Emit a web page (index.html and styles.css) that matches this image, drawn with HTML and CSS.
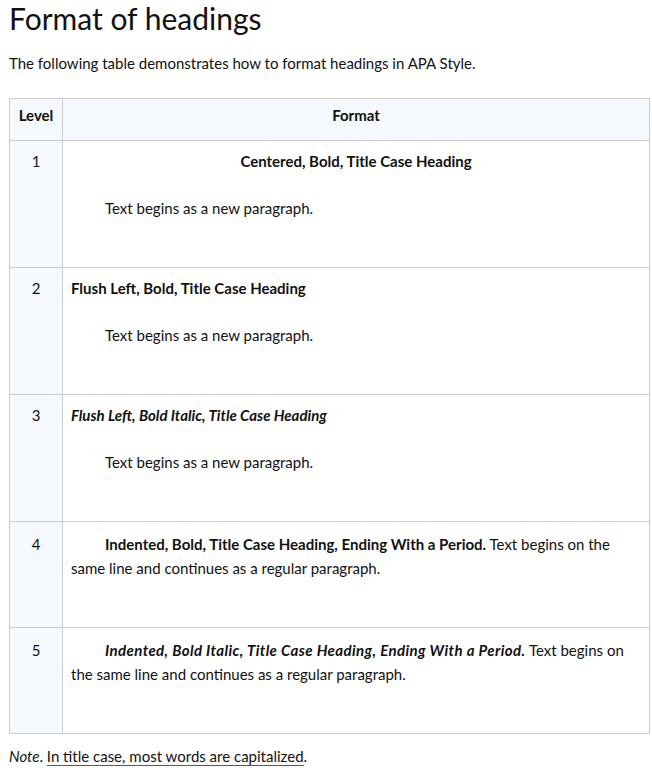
FILE: index.html
```html
<!DOCTYPE html>
<html>
<head>
<meta charset="utf-8">
<link rel="stylesheet" href="styles.css">
</head>
<body>
<h1 class="title">Format of headings</h1>
<p class="intro">The following table demonstrates how to format headings in APA Style.</p>
<table class="fmt">
  <colgroup><col class="c-level"><col></colgroup>
  <thead>
    <tr><th>Level</th><th>Format</th></tr>
  </thead>
  <tbody>
    <tr class="tall">
      <td class="lvl">1</td>
      <td><p class="center b">Centered, Bold, Title Case Heading</p><p class="ind">Text begins as a new paragraph.</p></td>
    </tr>
    <tr class="tall">
      <td class="lvl">2</td>
      <td><p class="b">Flush Left, Bold, Title Case Heading</p><p class="ind">Text begins as a new paragraph.</p></td>
    </tr>
    <tr class="tall">
      <td class="lvl">3</td>
      <td><p class="b i">Flush Left, Bold Italic, Title Case Heading</p><p class="ind">Text begins as a new paragraph.</p></td>
    </tr>
    <tr class="short">
      <td class="lvl">4</td>
      <td><p class="ind"><strong>Indented, Bold, Title Case Heading, Ending With a Period.</strong> Text begins on the same line and continues as a regular paragraph.</p></td>
    </tr>
    <tr class="short">
      <td class="lvl">5</td>
      <td><p class="ind"><strong class="bi">Indented, Bold Italic, Title Case Heading, Ending With a Period.</strong> Text begins on the same line and continues as a regular paragraph.</p></td>
    </tr>
  </tbody>
</table>
<p class="note"><em>Note</em>. <a href="#" class="lnk">In title case, most words are capitalized</a>.</p>
</body>
</html>
```
FILE: styles.css
```css
html, body {
  margin: 0;
  padding: 0;
  background: #fff;
}
body {
  padding: 0 2px 0 9px;
  font-family: Lato, "Liberation Sans", sans-serif;
  font-size: 15px;
  line-height: 24px;
  color: #111;
}
.title {
  margin: 0;
  font-size: 30px;
  font-weight: 400;
  line-height: 36px;
  color: #111;
}
.intro {
  margin: 15px 0 23px;
}
.fmt {
  width: 100%;
  border-collapse: collapse;
  border: 1px solid #ccc;
}
.c-level {
  width: 53px;
}
.fmt th, .fmt td {
  border: 1px solid #ccc;
  vertical-align: top;
  text-align: left;
}
.fmt th {
  background: #f5f8fc;
  padding: 4px 8px 13px;
  font-weight: 700;
  text-align: center;
}
.fmt td {
  padding: 8px 8px 26px;
}
.fmt tr.short td {
  padding: 10px 8px 24px;
}
.fmt td.lvl {
  background: #f5f8fc;
  text-align: center;
}
.fmt p {
  margin: 0 0 23px;
}
.fmt tr.tall td p:last-child {
  margin-bottom: 21px;
}
.center { text-align: center; }
.b { font-weight: 700; }
.i { font-style: italic; }
.bi {
  font-style: italic;
  letter-spacing: 0.4px;
}
.ind { text-indent: 34px; }
.note {
  margin: 10px 0 0;
}
.lnk {
  color: #111;
  text-decoration: none;
  border-bottom: 1px solid #2d6b7f;
}
```
